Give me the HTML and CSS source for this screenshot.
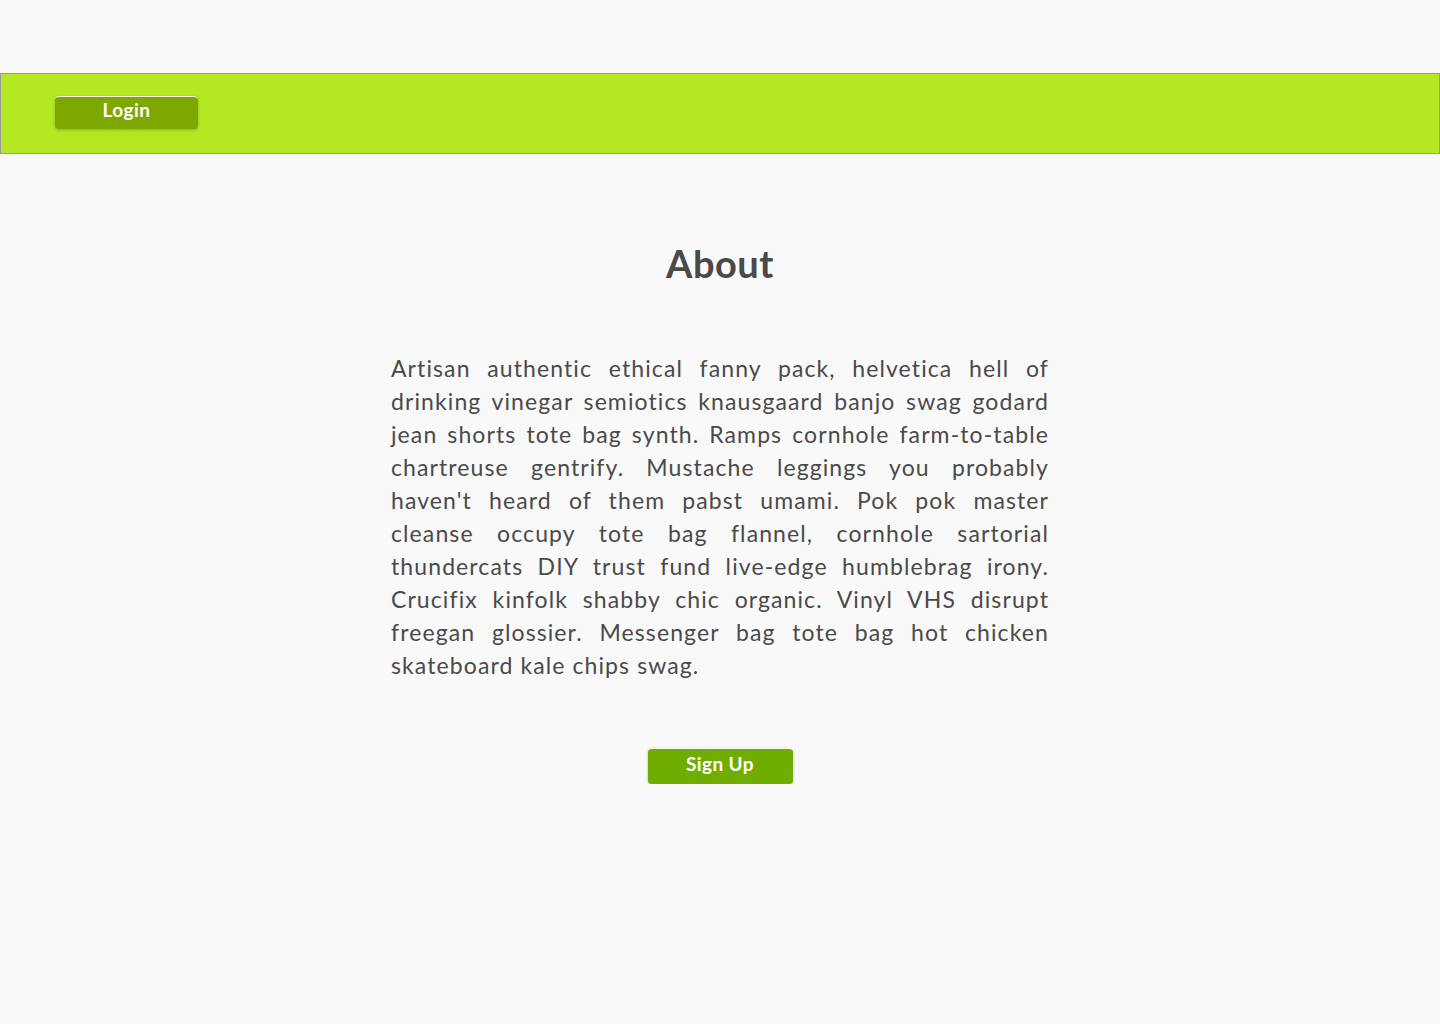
FILE: index.html
```html
<!DOCTYPE html>
<html>
<head>
<meta charset="utf-8">
<link rel="stylesheet" href="styles.css">
</head>
<body>
<div class="top-gap"></div>
<header class="header">
  <button class="btn btn-login">Login</button>
</header>
<main class="main">
  <h1 class="title">About</h1>
  <p class="text">Artisan authentic ethical fanny pack, helvetica hell of drinking vinegar semiotics knausgaard banjo swag godard jean shorts tote bag synth. Ramps cornhole farm-to-table chartreuse gentrify. Mustache leggings you probably haven't heard of them pabst umami. Pok pok master cleanse occupy tote bag flannel, cornhole sartorial thundercats DIY trust fund live-edge humblebrag irony. Crucifix kinfolk shabby chic organic. Vinyl VHS disrupt freegan glossier. Messenger bag tote bag hot chicken skateboard kale chips swag.</p>
  <button class="btn btn-signup">Sign Up</button>
</main>
</body>
</html>
```
FILE: styles.css
```css
html, body {
  margin: 0;
  padding: 0;
  background: #f9f9f9;
  font-family: Lato, "Open Sans", sans-serif;
  color: #4a4a4a;
}
.top-gap { height: 73px; }
.header {
  height: 79px;
  background: #b3e823;
  border: 1px solid #9a9a9a;
  display: flex;
  align-items: flex-start;
  padding-left: 54px;
}
.btn {
  font-family: Lato, sans-serif;
  font-weight: 700;
  color: #fff;
  border: none;
  border-top: 1px solid #fafff0;
  border-radius: 4px;
  cursor: pointer;
  box-shadow: 0 1px 3px rgba(60,80,0,0.35);
  padding: 0;
  letter-spacing: 0.4px;
}
.btn-login {
  margin-top: 22px;
  width: 143px;
  height: 33px;
  background: #7ea800;
  font-size: 19px;
  line-height: 24px;
  padding-bottom: 6px;
}
.main {
  display: flex;
  flex-direction: column;
  align-items: center;
}
.title {
  margin: 87px 0 0;
  font-size: 38px;
  font-weight: 700;
  line-height: 44px;
  letter-spacing: 0.5px;
  color: #4a4a4a;
}
.text {
  margin: 67px 0 0;
  width: 658px;
  font-size: 23px;
  line-height: 33px;
  letter-spacing: 1.1px;
  text-align: justify;
}
.btn-signup {
  margin-top: 66px;
  width: 145px;
  height: 36px;
  background: #6fad00;
  font-size: 19px;
  line-height: 24px;
  padding-bottom: 5px;
}
```
